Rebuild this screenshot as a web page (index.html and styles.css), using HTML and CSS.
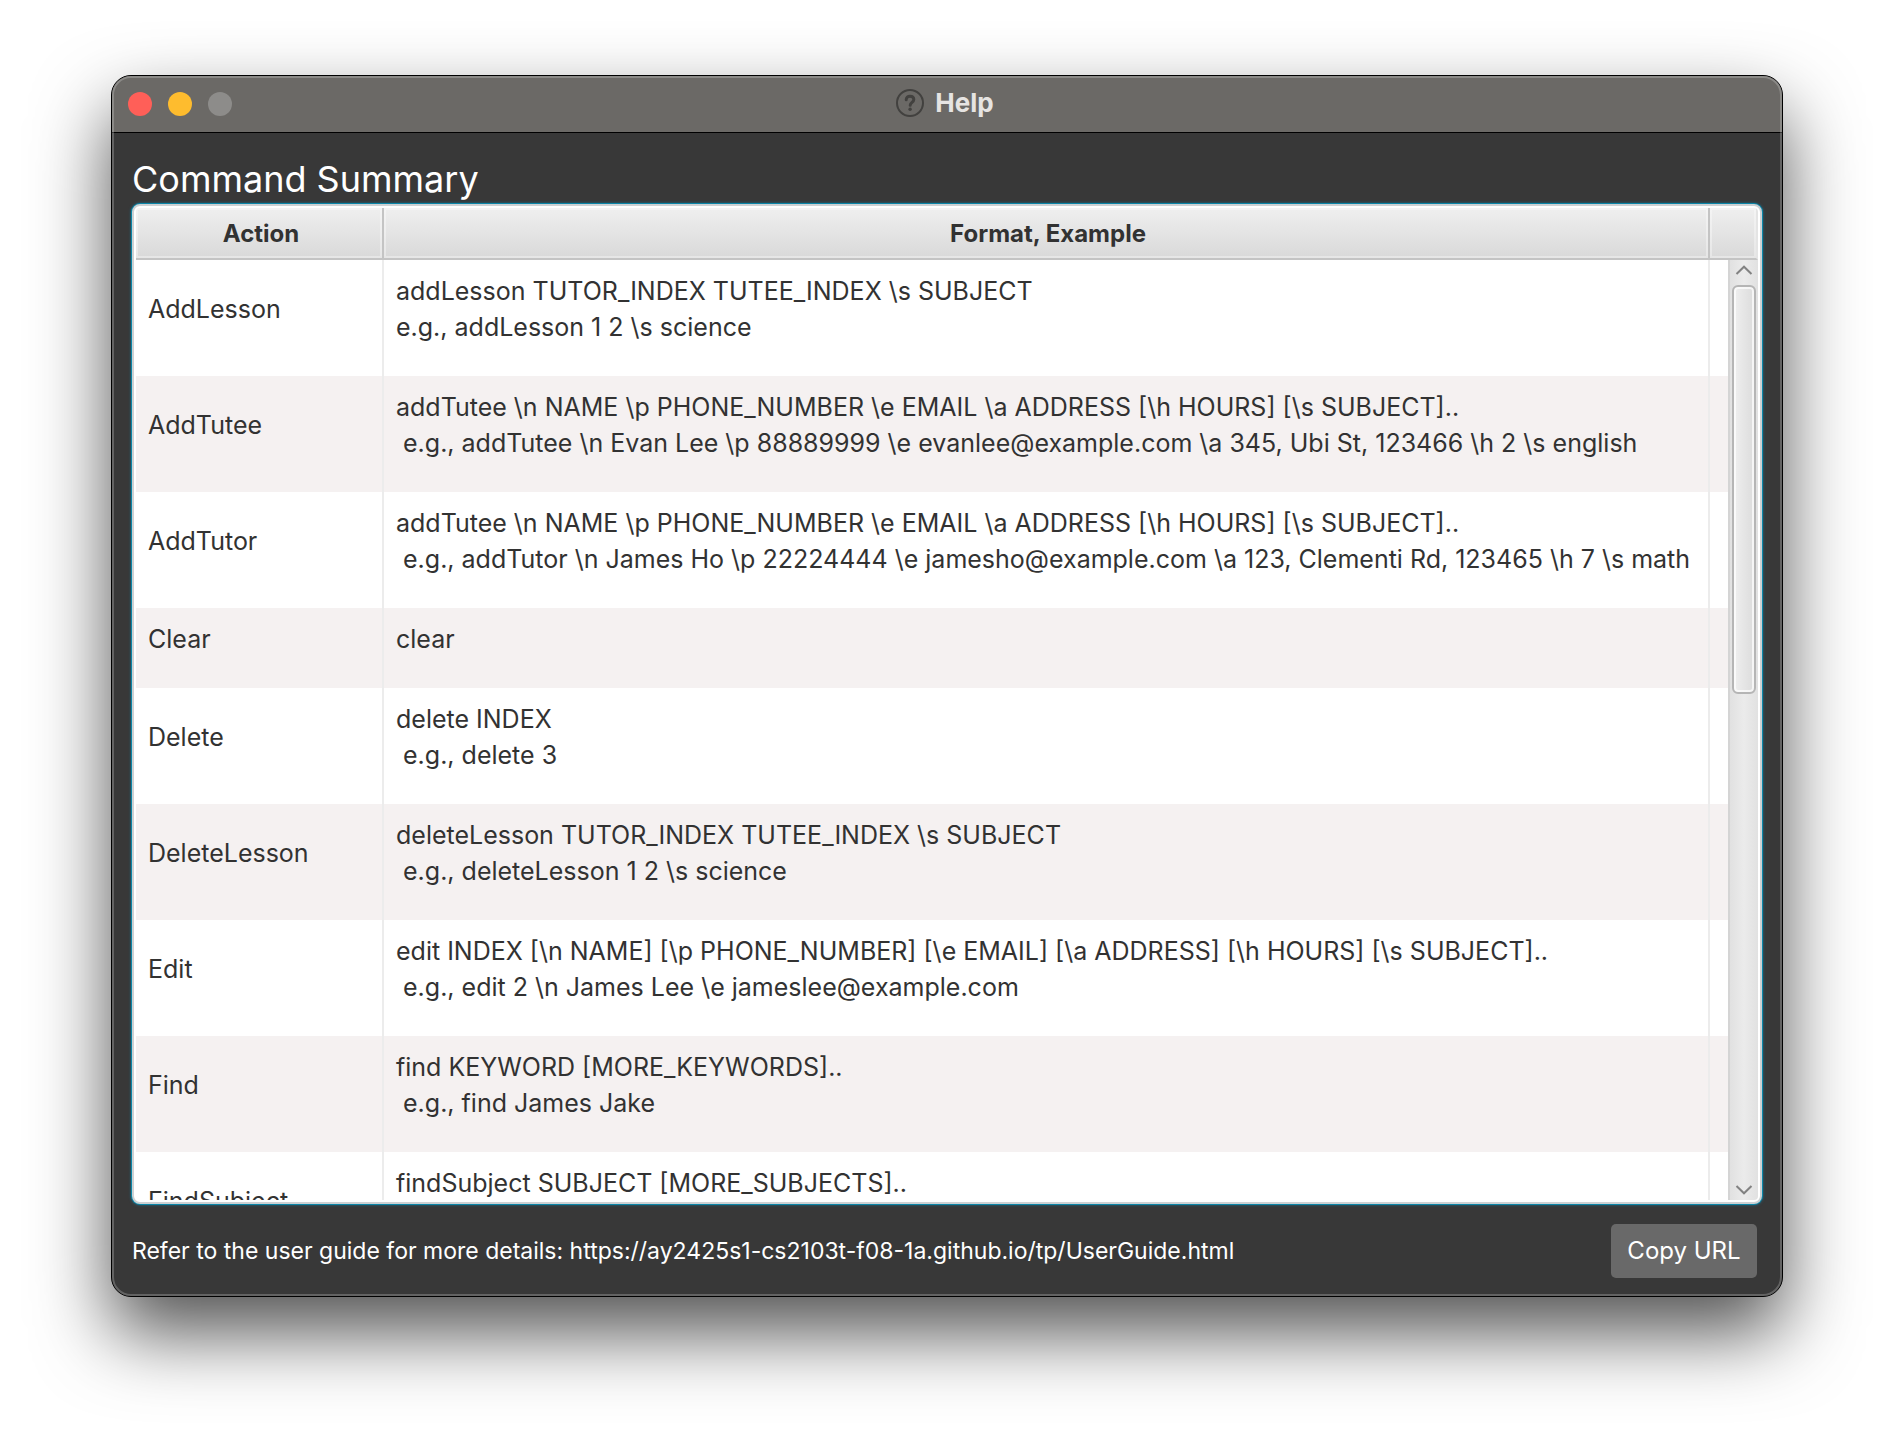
FILE: index.html
```html
<!DOCTYPE html>
<html lang="en">
<head>
<meta charset="utf-8">
<title>Help</title>
<link rel="stylesheet" href="styles.css">
</head>
<body>
<main class="window">
  <header class="titlebar">
    <div class="lights">
      <button class="light light-close" type="button" aria-label="Close"></button>
      <button class="light light-minimize" type="button" aria-label="Minimize"></button>
      <button class="light light-zoom" type="button" aria-label="Zoom" disabled></button>
    </div>
    <div class="window-title">
      <svg class="help-icon" viewBox="0 0 28 28" width="28" height="28" aria-hidden="true">
        <circle cx="14" cy="14" r="13"/>
        <path d="M10.2 10.8c0-2.200 1.600-3.600 3.800-3.600s3.800 1.300 3.800 3.300c0 2.700-3.600 2.900-3.600 5.700"/>
        <circle class="dot" cx="14.100" cy="20.200" r="1.700"/>
      </svg>
      <span>Help</span>
    </div>
  </header>
  <section class="content">
    <h1 class="heading" id="summary">Command Summary</h1>
    <div class="table-view">
      <div class="viewport">
        <table class="commands" aria-labelledby="summary">
          <colgroup><col class="col-action"><col><col class="col-filler"></colgroup>
          <thead>
            <tr><th scope="col">Action</th><th scope="col">Format, Example</th><th></th></tr>
          </thead>
          <tbody>
            <tr><td>AddLesson</td><td>addLesson TUTOR_INDEX TUTEE_INDEX \s SUBJECT<br>e.g., addLesson 1 2 \s science</td><td></td></tr>
            <tr><td>AddTutee</td><td>addTutee \n NAME \p PHONE_NUMBER \e EMAIL \a ADDRESS [\h HOURS] [\s SUBJECT]..<br>&nbsp;e.g., addTutee \n Evan Lee \p 88889999 \e evanlee@example.com \a 345, Ubi St, 123466 \h 2 \s english</td><td></td></tr>
            <tr><td>AddTutor</td><td>addTutee \n NAME \p PHONE_NUMBER \e EMAIL \a ADDRESS [\h HOURS] [\s SUBJECT]..<br>&nbsp;e.g., addTutor \n James Ho \p 22224444 \e jamesho@example.com \a 123, Clementi Rd, 123465 \h 7 \s math</td><td></td></tr>
            <tr><td>Clear</td><td>clear</td><td></td></tr>
            <tr><td>Delete</td><td>delete INDEX<br>&nbsp;e.g., delete 3</td><td></td></tr>
            <tr><td>DeleteLesson</td><td>deleteLesson TUTOR_INDEX TUTEE_INDEX \s SUBJECT<br>&nbsp;e.g., deleteLesson 1 2 \s science</td><td></td></tr>
            <tr><td>Edit</td><td>edit INDEX [\n NAME] [\p PHONE_NUMBER] [\e EMAIL] [\a ADDRESS] [\h HOURS] [\s SUBJECT]..<br>&nbsp;e.g., edit 2 \n James Lee \e jameslee@example.com</td><td></td></tr>
            <tr><td>Find</td><td>find KEYWORD [MORE_KEYWORDS]..<br>&nbsp;e.g., find James Jake</td><td></td></tr>
            <tr><td>FindSubject</td><td>findSubject SUBJECT [MORE_SUBJECTS]..<br>&nbsp;</td><td></td></tr>
          </tbody>
        </table>
        <div class="scrollbar">
          <button class="arrow arrow-up" type="button" aria-label="Scroll up">
            <svg viewBox="0 0 18 10" width="18" height="10"><path d="M1.500 9 9 1.700 16.500 9"/></svg>
          </button>
          <div class="track"><div class="thumb"></div></div>
          <button class="arrow arrow-down" type="button" aria-label="Scroll down">
            <svg viewBox="0 0 18 10" width="18" height="10"><path d="M1.500 1 9 8.300 16.500 1"/></svg>
          </button>
        </div>
      </div>
    </div>
    <footer class="footer">
      <p class="guide">Refer to the user guide for more details: https://ay2425s1-cs2103t-f08-1a.github.io/tp/UserGuide.html</p>
      <button class="copy" type="button">Copy URL</button>
    </footer>
  </section>
</main>
</body>
</html>
```
FILE: styles.css
```css
* {
  box-sizing: border-box;
}

body {
  margin: 0;
  height: 100vh;
  padding: 75px 111px 147px;
  overflow: hidden;
  background: #fff;
  color: #323232;
  font-family: Inter, "Liberation Sans", sans-serif;
  font-size: 25px;
  line-height: 36px;
}

button {
  border: 0;
  padding: 0;
  font: inherit;
}

/* Window frame */
.window {
  position: relative;
  display: flex;
  flex-direction: column;
  height: 100%;
  border: 1px solid #000;
  border-radius: 20px;
  background: #383838;
  box-shadow: 0 36px 76px rgba(0, 0, 0, 0.68);
}

/* Light rim drawn just inside the frame */
.window::after {
  content: "";
  position: absolute;
  inset: 0;
  border: 2px solid rgba(255, 255, 255, 0.22);
  border-radius: 19px;
  pointer-events: none;
}

.titlebar {
  display: grid;
  grid-template-columns: 1fr auto 1fr;
  align-items: center;
  height: 57px;
  border-bottom: 1px solid #000;
  border-radius: 19px 19px 0 0;
  background: #6b6966;
}

.lights {
  display: flex;
  gap: 16px;
  padding-left: 16px;
}

.light {
  width: 24px;
  height: 24px;
  border-radius: 50%;
}

.light-close { background: #ff5f58; }
.light-minimize { background: #febc2e; }
.light-zoom { background: #8d8c8a; }

.window-title {
  display: flex;
  align-items: center;
  gap: 11px;
  padding: 0 4px 3px 0;
  color: #e6e4e2;
  font-size: 26px;
  font-weight: 700;
}

.help-icon {
  fill: none;
  stroke: #42413f;
  stroke-width: 2;
}

.help-icon path {
  stroke-width: 3;
  stroke-linecap: round;
}

.help-icon .dot {
  fill: #42413f;
  stroke: none;
}

/* Content */
.content {
  display: flex;
  flex: 1;
  flex-direction: column;
  min-height: 0;
  padding: 23px 20px 18px;
}

.heading {
  margin: 0 0 2px;
  color: #fff;
  font-size: 36px;
  font-weight: 400;
  line-height: 46px;
}

.table-view {
  flex: 1;
  min-height: 0;
  padding: 2px;
  border: 2px solid #cdd1d3;
  border-radius: 8px;
  background: #fff;
  box-shadow: 0 0 0 1px #0b86a8, 0 0 3px 1px rgba(3, 158, 211, 0.5);
}

.viewport {
  position: relative;
  height: 100%;
  overflow: hidden;
  border-radius: 4px;
}

.commands {
  width: 100%;
  table-layout: fixed;
  border-collapse: separate;
  border-spacing: 0;
}

.col-action { width: 248px; }
.col-filler { width: 48px; }

.commands th {
  height: 52px;
  padding: 2px 0 0 4px;
  border-right: 2px solid #c4c4c4;
  border-bottom: 2px solid #c4c4c4;
  background: linear-gradient(#efefef, #d9d9d9);
  box-shadow: inset 0 0 0 2px rgba(255, 255, 255, 0.35);
  font-size: 24px;
  font-weight: 700;
}

.commands th:last-child {
  border-right-color: #e4e4e4;
}

.commands td {
  padding: 13px 0 31px 12px;
  border-right: 2px solid #ececec;
  white-space: nowrap;
}

.commands td:last-child {
  border-right: 0;
}

.commands tbody tr:nth-child(even) {
  background: #f5f1f1;
}

/* Scroll bar lies over the filler column, under the header */
.scrollbar {
  position: absolute;
  top: 52px;
  right: 0;
  bottom: 0;
  display: flex;
  flex-direction: column;
  width: 30px;
  border-left: 2px solid #d4d4d4;
  background: linear-gradient(90deg, #e1e1e1, #ebebeb 50%, #e1e1e1);
}

.arrow {
  display: flex;
  justify-content: center;
  height: 25px;
  padding: 5px 0;
  background: none;
}

.arrow-up { align-items: flex-start; }
.arrow-down { align-items: flex-end; }

.arrow svg {
  fill: none;
  stroke: #828282;
  stroke-width: 2;
}

.track {
  flex: 1;
  padding: 0 2px;
}

.thumb {
  height: 46%;
  border: 2px solid #b5b5b5;
  border-radius: 6px;
  background: linear-gradient(90deg, #efefef, #dcdcdc);
  box-shadow: inset 0 0 0 2px rgba(255, 255, 255, 0.7);
}

/* Footer */
.footer {
  display: flex;
  align-items: center;
  justify-content: space-between;
  margin-top: 20px;
  padding-right: 5px;
  color: #fff;
}

.guide {
  margin: 0;
  font-size: 23px;
}

.copy {
  width: 146px;
  height: 54px;
  border-radius: 5px;
  background: #696969;
  color: #fff;
  font-size: 24px;
}
```
